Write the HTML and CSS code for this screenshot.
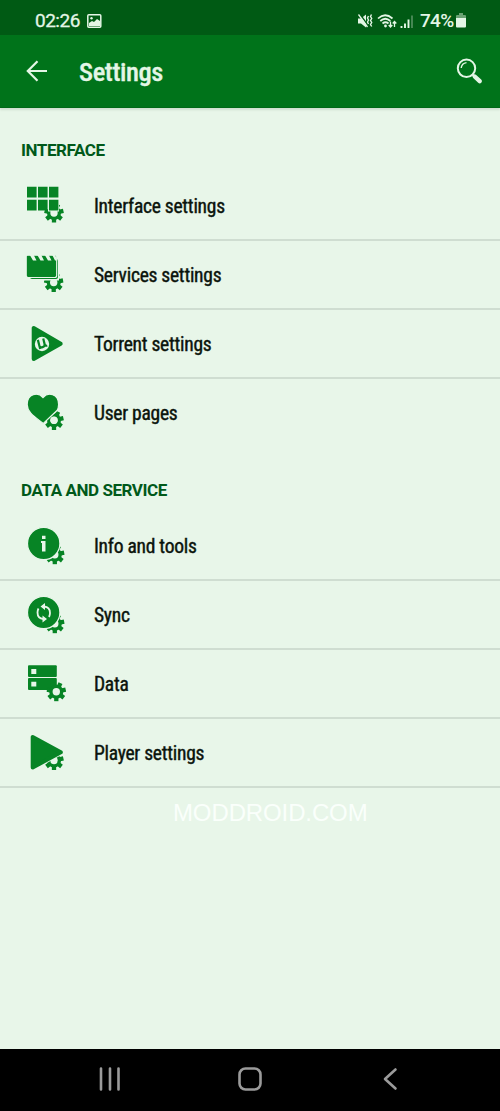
FILE: index.html
```html
<!DOCTYPE html>
<html lang="en">
<head>
<meta charset="utf-8">
<title>Settings</title>
<link rel="stylesheet" href="styles.css">
</head>
<body>
<svg class="defs" width="0" height="0" aria-hidden="true">
  <symbol id="gear" viewBox="-10 -10 20 20">
    <path d="M0 0V9.600M0 0L7.500 6M0 0L9.400-2.100M0 0L4.200-8.600M0 0L-4.200-8.600M0 0L-9.400-2.100M0 0L-7.500 6" stroke="#078425" stroke-width="4.300"/>
    <circle r="7" fill="#078425"/><circle r="3.700" fill="#e8f6e9"/>
  </symbol>
</svg>
<div class="screen">
  <div class="status">
    <span class="clock">02:26</span>
    <svg class="picture" width="15" height="14" viewBox="0 0 15 14"><rect x=".8" y=".8" width="13" height="12.4" rx="1" fill="none" stroke="#e4f6e6" stroke-width="1.5"/><path d="M2 12V9l3-2 2 1 3-3 3 2v5z" fill="#e4f6e6"/><circle cx="4.5" cy="4.3" r="1.2" fill="#e4f6e6"/></svg>
    <svg class="signals" width="58" height="18" viewBox="0 0 58 18" fill="none" stroke="#e4f6e6">
      <path d="M1 6.500h3l5-4v13l-5-4H1z" fill="#e4f6e6" stroke="none"/><path d="M2.500 1.500l8.500 12" stroke="#005a14" stroke-width="1.500"/><path d="M1.500 2.500l9 12.500" stroke-width="1.300"/>
      <path d="M11.500 4l-1 2 1 2-1 2 1 2M14.500 2.500l-1 2 1.200 2-1.200 2 1.200 2-1.200 2 1.200 2" stroke-width="1.400"/>
      <path d="M21 6.500q7-6.500 14.500 0M23.300 9q5-4.500 10 0M25.500 11.500q3-2.500 6 0" stroke-width="1.700"/><circle cx="28.500" cy="14" r="1.400" fill="#e4f6e6" stroke="none"/>
      <path d="M33.500 9.500v5m-1.800-1.500l1.800 2 1.800-2M37.500 15v-5m-1.800 1.500l1.800-2 1.800 2" stroke-width="1.300"/>
      <path d="M44.500 16v-2M48 16v-4.500M51.500 16v-8.500" stroke-width="1.900"/><path d="M55 16V3.500" stroke="#579363" stroke-width="1.600"/>
    </svg>
    <span class="percent">74%</span>
    <svg class="battery" width="10" height="15" viewBox="0 0 10 15"><path d="M3 0h4v2h2q1 0 1 1v3H0V3q0-1 1-1h2z" fill="#6aa273"/><path d="M0 5h10v8.500q0 1-1 1H1q-1 0-1-1z" fill="#e4f6e6"/></svg>
  </div>
  <header class="bar">
    <svg class="back" width="22" height="22" viewBox="0 0 22 22" fill="none" stroke="#e4f6e6" stroke-width="2.200"><path d="M21 11H2M11.500 1.300L1.800 11l9.700 9.700"/></svg>
    <h1 class="title"><span>Settings</span></h1>
    <svg class="search" width="28" height="28" viewBox="0 0 28 28" fill="none" stroke="#e4f6e6"><circle cx="11.500" cy="11.300" r="8.700" stroke-width="2"/><path d="M6.200 11q.5-4.800 5.300-5.400" stroke-width="1.400"/><path d="M17.500 17.500l2 2" stroke-width="2"/><path d="M19.700 19.500l5 4.700" stroke-width="4.400" stroke-linecap="round"/></svg>
  </header>
  <main class="content">
    <h2 class="section"><span>INTERFACE</span></h2>
    <div class="row">
      <svg class="icon" viewBox="0 0 48 48"><use href="#gear" x="24" y="21" width="20" height="20"/><path class="gap" d="M28 17h11v12.500H28z"/><path class="ink" d="M7 4.800h9.600v10.800H7zM18 4.800h9.600v10.800H18zM29 4.800h9.400v10.800H29zM7 17.800h9.600v10.800H7zM18 17.800h9.600v10.800H18zM29 17.800h9.400v10.800H29z"/></svg>
      <span class="label">Interface settings</span>
    </div>
    <div class="row">
      <svg class="icon" viewBox="0 0 48 48"><use href="#gear" x="23.700" y="21.500" width="20" height="20"/><path class="gap" d="M20 12h19v17.500H20z"/><path class="ink" d="M10 11q0-3 3-3h23q2 0 2 2v16q0 2-2 2H12q-2 0-2-2z"/><path class="ink edge" d="M6.200 5.500q0-1.300 1.300-1.300h28.200q1 0 1 1v19.300q0 2-2 2H8.200q-2 0-2-2z"/><path class="gap" d="M9.500 3.500h4l3 6H13zM17 3.500h4l3 6h-3.500zM24.500 3.500h4l3 6H28zM32 3.500h2.500l2 3v3h-1.500z"/></svg>
      <span class="label">Services settings</span>
    </div>
    <div class="row">
      <svg class="icon" viewBox="0 0 48 48"><path class="ink round" d="M13.700 8v31L40.700 23.700z"/><circle class="gap" cx="22" cy="24" r="7.200"/><path d="M19 19v9.500M19 25q0 2.200 2.800 2.200 2.700 0 2.700-2.700V19m0 5.500q0 2.500 2.200 2.300" transform="rotate(-14 22 24)" fill="none" stroke="#078425" stroke-width="2.200"/></svg>
      <span class="label">Torrent settings</span>
    </div>
    <div class="row last">
      <svg class="icon" viewBox="0 0 48 48"><use href="#gear" x="24" y="21.300" width="20" height="20"/><path class="ink edge" d="M23 8.500C18 2.500 7.200 4.500 7.200 15.500c0 8 8 12.500 16.100 19L37 21.500c1.300-2 1.600-4 1.600-6C38.600 4.500 28 2.500 23 8.500z"/><circle class="gap" cx="34" cy="31.300" r="3.600"/></svg>
      <span class="label">User pages</span>
    </div>
    <h2 class="section second"><span>DATA AND SERVICE</span></h2>
    <div class="row">
      <svg class="icon" viewBox="0 0 48 48"><use href="#gear" x="24.800" y="22.700" width="20" height="20"/><circle class="ink edge" cx="23.700" cy="21.500" r="16.200"/><path class="gap" d="M22 13.800h3.500v3.200H22zM21 19h4.500v10.500H22V21h-1z"/></svg>
      <span class="label">Info and tools</span>
    </div>
    <div class="row">
      <svg class="icon" viewBox="0 0 48 48"><use href="#gear" x="24.800" y="22.700" width="20" height="20"/><circle class="ink edge" cx="23.700" cy="21.500" r="16.200"/><g fill="none" stroke="#e8f6e9" stroke-width="1.800"><path d="M24 15.500q6 .5 6 6.500 0 2-1 4M23.500 28q-6-.5-6-6.500 0-2 1-4"/></g><path class="gap" d="M25 12v7l-4.500-3.500zM22.500 24.500v7L27 28z"/></svg>
      <span class="label">Sync</span>
    </div>
    <div class="row">
      <svg class="icon" viewBox="0 0 48 48"><rect class="ink" x="8" y="5.300" width="28.800" height="11.700" rx="1"/><rect class="ink" x="8" y="18" width="28.800" height="12" rx="1"/><path class="gap" d="M11.300 9h5v5h-5zM11.300 21.700h5v4.800h-5z"/><use href="#gear" x="26.300" y="21.700" width="20" height="20"/></svg>
      <span class="label">Data</span>
    </div>
    <div class="row">
      <svg class="icon" viewBox="0 0 48 48"><use href="#gear" x="24" y="21.500" width="20" height="20"/><path d="M12 42L43.500 25V13H12z" fill="#e8f6e9"/><path class="ink round" d="M12.700 8v30.500L40.800 23.300z"/></svg>
      <span class="label">Player settings</span>
    </div>
    <p class="watermark">MODDROID.COM</p>
  </main>
  <nav class="nav">
    <svg width="24" height="24" viewBox="0 0 24 24"><path d="M3 1.500v21M12 1.500v21M20.500 1.500v21"/></svg>
    <svg width="24" height="24" viewBox="0 0 24 24"><rect x="1.500" y="1.500" width="21" height="21" rx="6"/></svg>
    <svg width="24" height="24" viewBox="0 0 24 24"><path d="M17.500 2.500L7 12l10.500 9.500"/></svg>
  </nav>
</div>
</body>
</html>
```
FILE: styles.css
```css
* { box-sizing: border-box; }
body { margin: 0; font-family: "Roboto Condensed", Roboto, sans-serif; background: #e8f6e9; }
.defs { display: block; height: 0; }
.screen { width: 500px; height: 1111px; display: flex; flex-direction: column; overflow: hidden; }
.status { height: 35px; background: #005a14; color: #e4f6e6; display: flex; align-items: center; padding: 6px 34px 0 35px; font: 500 19px/22px Roboto, sans-serif; }
.clock { width: 52px; font-weight: 400; letter-spacing: -.5px; -webkit-text-stroke: .3px; }
.signals { margin-left: auto; }
.percent { width: 36px; margin-left: 5px; letter-spacing: -.7px; }
.bar { height: 73px; background: #00731a; display: flex; align-items: center; padding: 0 17px 0 26px; color: #e4f6e6; border-bottom: 1px solid #006817; box-shadow: 0 2px 2px #cfdfd0; position: relative; }
.title { margin: 2px auto 0 31px; font-size: 26.5px; font-weight: 500; line-height: 34px; font-stretch: 75%; letter-spacing: -.4px; -webkit-text-stroke: .3px; }
.content { flex: 1; background: #e8f6e9; }
.section { margin: 0; height: 64px; padding: 31px 0 0 21px; font: 700 17px/22px Roboto, sans-serif; letter-spacing: -.43px; color: #00591a; }
.row { height: 69px; display: flex; align-items: center; padding-left: 20px; border-bottom: 2px solid #cfddd1; }
.row.last { border-bottom-color: transparent; }
.icon { width: 48px; height: 48px; margin-right: 26px; flex: none; }
.ink { fill: #078425; }
.gap { fill: #e8f6e9; }
.edge { stroke: #e8f6e9; stroke-width: 1.2px; }
.round { stroke: #078425; stroke-width: 4px; stroke-linejoin: round; }
.label { margin-top: 3px; font-size: 19.5px; line-height: 26px; font-stretch: 75%; letter-spacing: -.26px; color: #0b140c; -webkit-text-stroke: .4px; white-space: nowrap; }
.watermark { margin: 11px 0 0 173px; font: 24px/28px "Liberation Sans", sans-serif; color: #fafffb; letter-spacing: -.12px; }
.nav { height: 62px; padding-bottom: 2px; background: #000; display: grid; grid-template-columns: repeat(3, 24px); column-gap: 116px; justify-content: center; align-items: center; }
.nav svg { fill: none; stroke: #9b9b9b; stroke-width: 2.6px; stroke-linecap: round; stroke-linejoin: round; }
```
